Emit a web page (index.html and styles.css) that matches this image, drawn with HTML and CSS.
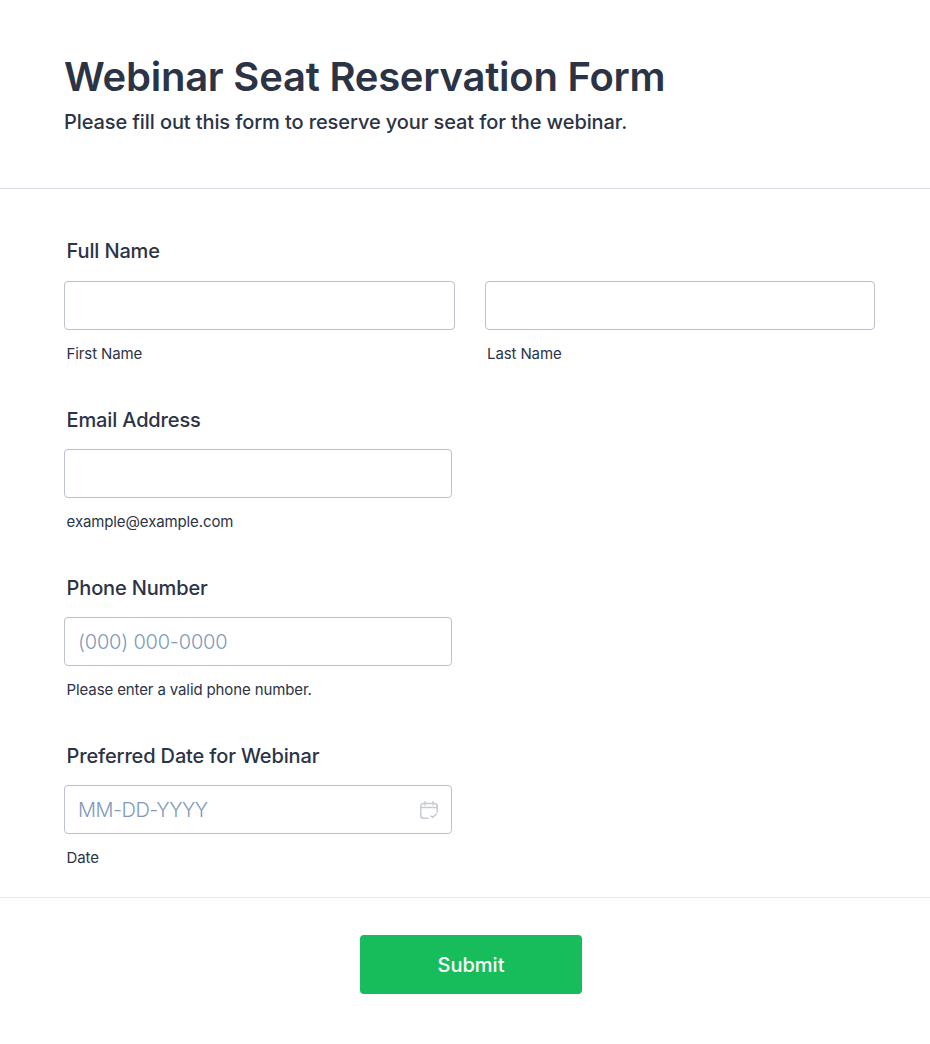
FILE: index.html
```html
<!DOCTYPE html>
<html lang="en">
<head>
    <meta charset="UTF-8">
    <title>Webinar Seat Reservation Form</title>
    <link rel="stylesheet" href="styles.css">
</head>
<body>
<div class="form">
    <div class="header">
        <h1>Webinar Seat Reservation Form</h1>
        <p>Please fill out this form to reserve your seat for the webinar.</p>
    </div>
    <div class="fields">
        <div class="field">
            <label class="label">Full Name</label>
            <div class="name_row">
                <div class="name_col">
                    <input type="text" class="input">
                    <span class="hint">First Name</span>
                </div>
                <div class="name_col">
                    <input type="text" class="input">
                    <span class="hint">Last Name</span>
                </div>
            </div>
        </div>
        <div class="field">
            <label class="label">Email Address</label>
            <input type="text" class="input half">
            <span class="hint">example@example.com</span>
        </div>
        <div class="field">
            <label class="label">Phone Number</label>
            <input type="text" class="input half" placeholder="(000) 000-0000">
            <span class="hint">Please enter a valid phone number.</span>
        </div>
        <div class="field">
            <label class="label">Preferred Date for Webinar</label>
            <div class="date_box">
                <input type="text" class="input half" placeholder="MM-DD-YYYY">
                <svg class="date_icon" width="18" height="18" viewBox="0 0 18 18" fill="none" stroke="#c6cad6" stroke-width="1.500" stroke-linecap="round" stroke-linejoin="round">
                    <path d="M8 17.250H3.250a2.500 2.500 0 0 1-2.500-2.500V5a2.500 2.500 0 0 1 2.500-2.500h11.500a2.500 2.500 0 0 1 2.500 2.500v6"/>
                    <path d="M.75 6.500h16.500M5 .75V4M13 .75V4"/>
                    <path d="M11 15l1.500 1.500L16.500 13"/>
                </svg>
            </div>
            <span class="hint">Date</span>
        </div>
    </div>
    <div class="footer">
        <button type="button" class="submit">Submit</button>
    </div>
</div>
</body>
</html>
```

FILE: styles.css
```css
* {
    box-sizing: border-box;
}
body {
    margin: 0;
    background: #fff;
    font-family: Inter, "Liberation Sans", sans-serif;
    color: #2c3345;
}
.form {
    width: 930px;
    height: 1044px;
}
.header {
    height: 189px;
    padding: 53px 64px 0;
    border-bottom: 1px solid #d8dae9;
}
h1 {
    margin: 0 0 7px;
    font-size: 40px;
    line-height: 48px;
    font-weight: 600;
    letter-spacing: -0.24px;
}
.header p {
    margin: 0;
    font-size: 20px;
    line-height: 28px;
    font-weight: 500;
    letter-spacing: -0.1px;
}
.fields {
    padding: 48px 55px 0 64px;
    height: 708px;
}
.field {
    display: flex;
    flex-direction: column;
    align-items: flex-start;
    height: 168px;
}
.label {
    margin-left: 2.6px;
    font-size: 20px;
    line-height: 28px;
    font-weight: 500;
    letter-spacing: -0.15px;
    margin-bottom: 16px;
}
.field + .field .label {
    margin-top: 1px;
    margin-bottom: 15px;
}
.name_row {
    display: flex;
    gap: 30px;
    width: 100%;
}
.name_col {
    flex: 1;
    display: flex;
    flex-direction: column;
}
.input {
    width: 100%;
    height: 49px;
    padding: 0 13px;
    border: 1px solid #bcc1d0;
    border-radius: 4px;
    background: #fff;
    font-family: inherit;
    font-size: 20px;
    letter-spacing: -0.2px;
    color: #2c3345;
}
.input::placeholder {
    color: #8199ba;
    font-weight: 300;
}
.half {
    width: 388px;
}
.hint {
    display: block;
    margin: 15px 0 0 2.6px;
    font-size: 15px;
    line-height: 18px;
    letter-spacing: -0.12px;
}
.date_box {
    position: relative;
    width: 388px;
}
.date_box .input {
    letter-spacing: -0.5px;
}
.date_icon {
    position: absolute;
    top: 16px;
    right: 14px;
}
.footer {
    display: flex;
    justify-content: center;
    padding: 37px 0 0 12px;
    border-top: 1px solid #e8e9f0;
}
.submit {
    width: 222px;
    height: 59px;
    border: 0;
    border-radius: 4px;
    background: #18bd5b;
    color: #fff;
    font-family: inherit;
    font-size: 20px;
    font-weight: 500;
}
```
